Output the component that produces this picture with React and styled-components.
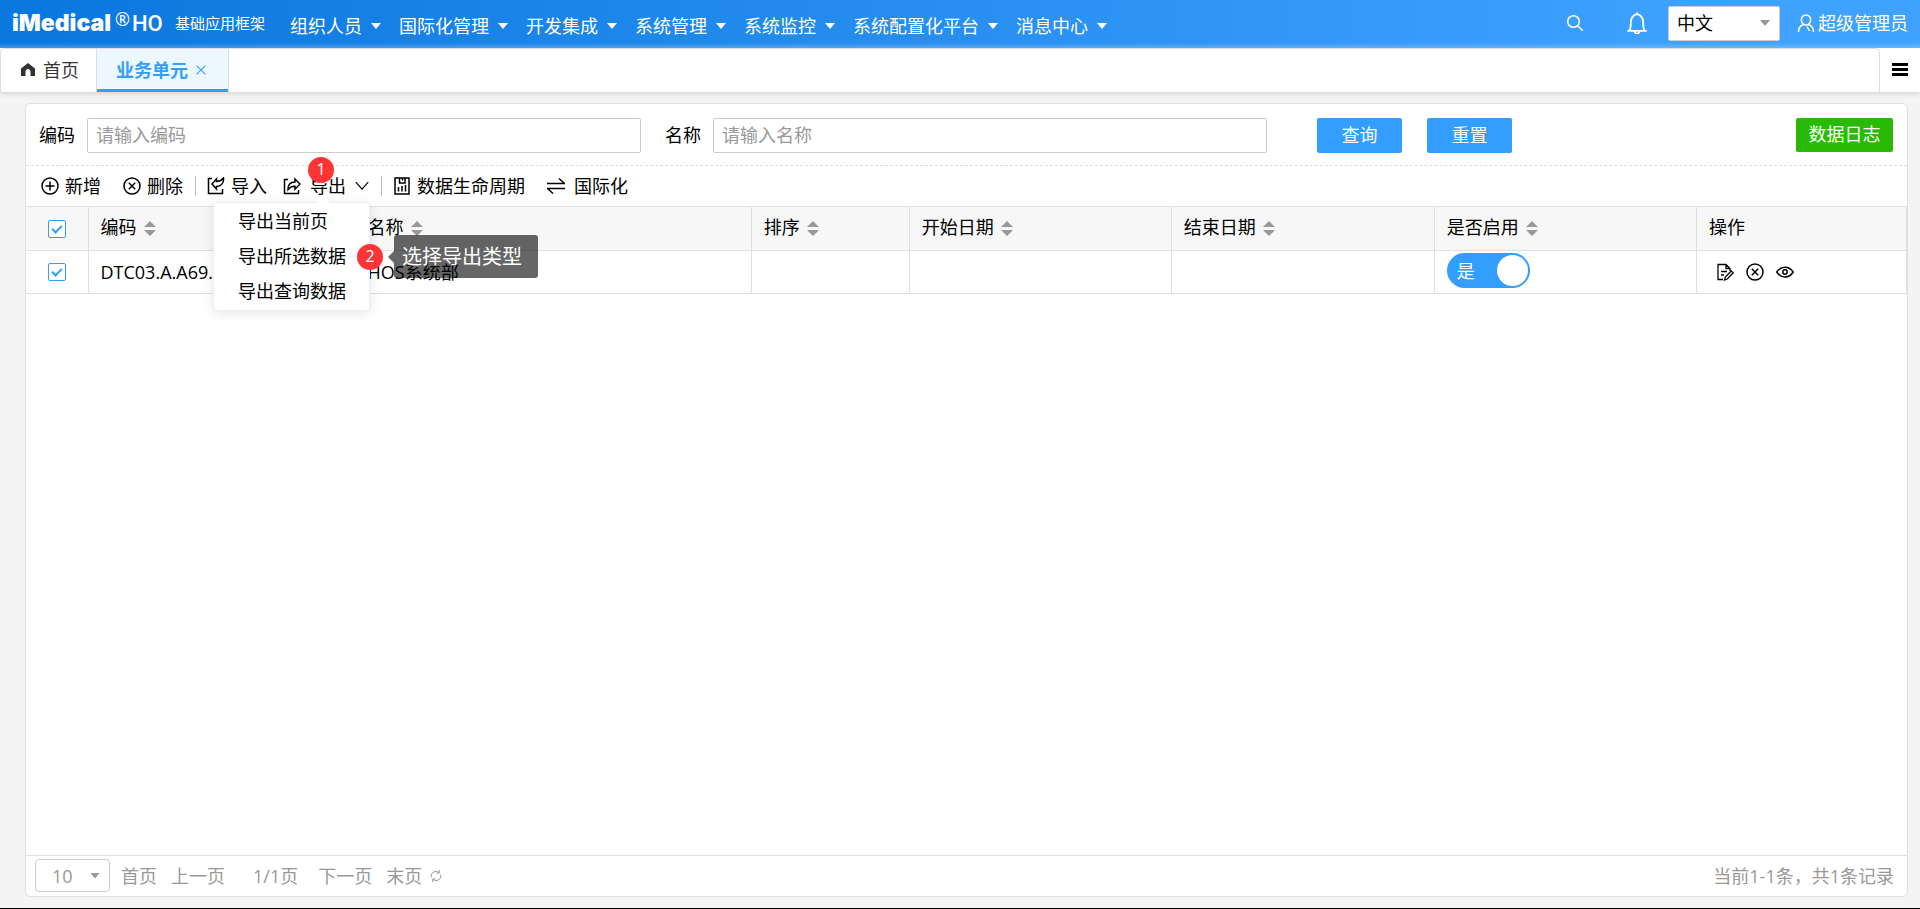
import React, { useState } from 'react';
import styled, { createGlobalStyle } from 'styled-components';

const GlobalStyle = createGlobalStyle`
    *, *::before, *::after {
        box-sizing: border-box;
    }
    body {
        margin: 0;
        background: #f4f4f4;
        color: #000;
        font: 18px/24px "Open Sans", "Noto Sans CJK SC", sans-serif;
    }
    button, input, select {
        font: inherit;
        color: inherit;
        margin: 0;
    }
    button {
        padding: 0;
        border: 0;
        background: none;
        cursor: pointer;
    }
    a {
        color: inherit;
        text-decoration: none;
    }
`;

const Page = styled.div`
    display: flex;
    flex-direction: column;
    min-height: 100vh;
    border-bottom: 1px solid #000;
`;

/* header */
const Header = styled.header`
    display: flex;
    align-items: center;
    height: 48px;
    padding: 0 12px;
    color: #fff;
    white-space: nowrap;
    background: linear-gradient(to right, #0a77de 0%, #40a2ff 90%);
    box-shadow: inset 0 -5px 4px -3px rgba(255, 255, 255, 0.3);
`;
const Brand = styled.a`
    display: flex;
    align-items: center;
    width: 278px;
    height: 44px;
`;
const BrandName = styled.span`
    width: 103px;
    margin-bottom: 2px;
    font: 900 23px/32px Inter, sans-serif;
`;
const BrandMark = styled.sup`
    align-self: flex-start;
    width: 17px;
    margin-top: 5px;
    font: 18px/24px "Open Sans", sans-serif;
`;
const BrandSuffix = styled.span`
    width: 43px;
    font: 500 22px/32px Roboto, sans-serif;
`;
const BrandTitle = styled.span`
    margin-bottom: 2px;
    font-size: 15px;
`;
const Nav = styled.nav`
    display: flex;
    flex: 1;
    gap: 18px;
    padding-top: 4px;
`;
const NavItem = styled.a`
    display: flex;
    align-items: center;
    gap: 9px;
`;
const Caret = styled.span`
    flex: none;
    width: 10px;
    height: 6px;
    background: ${({ $color }) => $color || '#fff'};
    clip-path: polygon(0 0, 100% 0, 50% 100%);
`;
const HeaderTools = styled.div`
    display: flex;
    align-items: center;
    height: 46px;
    margin-bottom: 2px;
`;
const IconButton = styled.button`
    display: flex;
    margin-right: ${({ $space }) => $space || 0}px;
`;
const SelectBox = styled.span`
    position: relative;
    display: inline-flex;
    align-items: center;

    ${Caret} {
        position: absolute;
        right: 10px;
        pointer-events: none;
    }
`;
const LangSelect = styled.select`
    width: 112px;
    height: 35px;
    padding: 0 8px;
    appearance: none;
    color: #000;
    background: #fff;
    border: 1px solid #ccc;
    border-radius: 2px;
`;
const UserLink = styled.a`
    display: flex;
    align-items: center;
    gap: 3px;
    margin-left: 17px;
`;

/* tabs */
const TabBar = styled.div`
    display: flex;
    height: 44px;
    background: #fff;
    box-shadow: 0 2px 5px rgba(0, 0, 0, 0.12);
`;
const TabList = styled.div`
    display: flex;
    flex: 1;
    border: 1px solid #ddd;
    border-bottom: 0;
    border-radius: 5px 5px 0 0;
`;
const Tab = styled.div`
    display: flex;
    align-items: center;
    gap: 8px;
    padding: 0 17px 2px 20px;
    color: #333;
    border-right: 1px solid #ddd;
`;
const ActiveTab = styled(Tab)`
    padding: 0 22px 2px 19px;
    color: #339eff;
    font-weight: 700;
    background: #ecf7fe;
    box-shadow: inset 0 -3px #339eff;
`;
const TabMenu = styled.button`
    display: flex;
    align-items: center;
    justify-content: center;
    width: 40px;
    padding-bottom: 2px;
`;

/* panel */
const Panel = styled.main`
    display: flex;
    flex-direction: column;
    flex: 1;
    margin: 11px 12px 11px 25px;
    background: #fff;
    border: 1px solid #e0e0e0;
    border-radius: 5px;
`;
const SearchForm = styled.form`
    display: flex;
    align-items: flex-start;
    height: 62px;
    padding: 14px 14px 0 13px;
    border-bottom: 1px dashed #ddd;
`;
const Field = styled.label`
    display: flex;
    flex: 1;
    align-items: center;
    gap: 12px;
    max-width: 602px;
    margin-right: 24px;
    white-space: nowrap;
`;
const FieldName = styled.span`
    padding-bottom: 2px;
`;
const TextInput = styled.input`
    flex: 1;
    min-width: 0;
    height: 35px;
    padding: 0 8px 2px;
    background: #fff;
    border: 1px solid #ccc;
    border-radius: 2px;
    outline: 0;

    &::placeholder {
        color: #999;
        opacity: 1;
    }
`;
const FormButtons = styled.div`
    display: flex;
    gap: 25px;
    margin-left: 26px;
    margin-right: auto;
`;
const Button = styled.button`
    width: 85px;
    height: 35px;
    padding-bottom: 2px;
    color: #fff;
    background: #339eff;
    border-radius: 2px;
`;
const LogButton = styled(Button)`
    width: 97px;
    height: 34px;
    background: #28ba05;
`;

const Toolbar = styled.div`
    display: flex;
    align-items: center;
    height: 40px;
    padding: 0 15px;
    white-space: nowrap;
`;
const ToolGroup = styled.div`
    display: flex;
    align-items: center;
    gap: ${({ $gap }) => $gap}px;

    & + & {
        margin-left: 12px;
        padding-left: 12px;
        background: linear-gradient(#bbb, #bbb) left center / 1px 20px no-repeat;
    }
`;
const ToolButton = styled.button`
    display: flex;
    align-items: center;
    gap: ${({ $gap }) => $gap || 6}px;
`;
const Export = styled.div`
    position: relative;
    display: flex;
    align-items: center;
    gap: 9px;
`;
const Badge = styled.span`
    position: absolute;
    z-index: 3;
    width: 26px;
    height: 26px;
    color: #fff;
    font: 16px/24px "Open Sans", sans-serif;
    text-align: center;
    background: #fd3537;
    border-radius: 50%;
`;
const ExportBadge = styled(Badge)`
    top: -17px;
    left: 25px;
`;
const ItemBadge = styled(Badge)`
    top: 5px;
    right: -14px;
`;
const Menu = styled.ul`
    position: absolute;
    top: 28px;
    left: -70px;
    z-index: 2;
    width: 157px;
    margin: 0;
    padding: 1px 0;
    list-style: none;
    background: #fff;
    border: 1px solid #ebeef5;
    border-radius: 3px;
    box-shadow: 0 2px 12px rgba(0, 0, 0, 0.1);

    &::before {
        content: '';
        position: absolute;
        top: -7px;
        left: 102px;
        width: 14px;
        height: 7px;
        background: #fff;
        clip-path: polygon(50% 0, 100% 100%, 0 100%);
    }
`;
const MenuItem = styled.li`
    position: relative;
    height: 35px;
`;
const MenuButton = styled.button`
    width: 100%;
    height: 100%;
    padding: 0 0 2px 24px;
    text-align: left;
`;
const Tooltip = styled.span`
    position: absolute;
    top: -4px;
    left: 180px;
    width: 144px;
    height: 43px;
    padding-left: 8px;
    color: #fff;
    font-size: 20px;
    line-height: 43px;
    background: rgba(0, 0, 0, 0.6);
    border-radius: 3px;

    &::before {
        content: '';
        position: absolute;
        top: 16px;
        left: -6px;
        width: 6px;
        height: 12px;
        background: rgba(0, 0, 0, 0.6);
        clip-path: polygon(0 50%, 100% 0, 100% 100%);
    }
`;

/* table */
const TableArea = styled.div`
    flex: 1;
`;
const Table = styled.table`
    width: 100%;
    table-layout: fixed;
    border-collapse: collapse;
    white-space: nowrap;
`;
const Cell = styled.td`
    height: 43px;
    padding: 0 0 0 12px;
    border: 1px solid #e0e0e0;

    &:first-child {
        border-left: 0;
    }
`;
const HeadCell = styled.th`
    height: 44px;
    padding: 0 0 0 12px;
    font-weight: inherit;
    text-align: left;
    background: #f7f7f7;
    border: 1px solid #e0e0e0;

    &:first-child {
        border-left: 0;
    }
`;
const HeadLabel = styled.span`
    display: flex;
    align-items: center;
    gap: 7px;
    padding-bottom: 3px;
`;
const SortButton = styled.button`
    display: flex;
    padding-top: 3px;
`;
const Checkbox = styled.input`
    display: grid;
    place-items: center;
    width: 18px;
    height: 18px;
    margin-left: 10px;
    appearance: none;
    background: #fff;
    border: 1px solid #339eff;
    border-radius: 2px;

    &:checked::after {
        content: '';
        width: 10px;
        height: 6px;
        margin-bottom: 2px;
        border: solid #339eff;
        border-width: 0 0 2px 2px;
        transform: rotate(-45deg);
    }
`;
const Switch = styled.label`
    display: flex;
    align-items: center;
    justify-content: space-between;
    width: 83px;
    height: 35px;
    margin-bottom: 3px;
    padding: 0 2px 0 10px;
    color: #fff;
    background: #339eff;
    border-radius: 18px;
`;
const SwitchKnob = styled.input`
    width: 31px;
    height: 31px;
    appearance: none;
    background: #fff;
    border-radius: 50%;
`;
const RowActions = styled.div`
    display: flex;
    align-items: center;
    gap: 12px;
    padding-left: 7px;
`;

/* pager */
const Pager = styled.footer`
    display: flex;
    align-items: center;
    height: 41px;
    padding: 0 13px 1px 9px;
    color: #999;
    white-space: nowrap;
    border-top: 1px solid #e0e0e0;
`;
const SizeSelect = styled.select`
    width: 75px;
    height: 33px;
    padding: 0 16px;
    appearance: none;
    background: #fff;
    border: 1px solid #ccc;
    border-radius: 4px;
`;
const PageLinks = styled.div`
    display: flex;
    align-items: center;
    gap: 14px;
    margin-left: 11px;
`;
const PageNumber = styled.span`
    margin: 0 6px 0 14px;
`;
const LastPage = styled.span`
    display: flex;
    align-items: center;
    gap: 8px;
`;
const Total = styled.span`
    margin-left: auto;
`;

const icons = {
    plus: <><circle cx="9" cy="9" r="8" /><path d="M9 4.5v9M4.5 9h9" /></>,
    remove: <><circle cx="9" cy="9" r="8" /><path d="M5.8 5.8l6.4 6.4M12.2 5.8l-6.4 6.4" /></>,
    importIn: <path d="M5 1.5H1.5v15h14V12M5 7l4.500-5v2.500C13 4.300 15 3 16.500 1 17 6 14 9.500 9.500 9.500V12L5 7z" />,
    exportOut: <path d="M5 2.500H1.500v14h14V13M17 7l-5-5v3C7.500 5 5 8 5 12.500 7 10 9 9 12 9.200v3L17 7z" />,
    chart: <path d="M2 1h14v16H2zM6.500 1v5h5.500V1M9.500 1v2.500M5.500 14.500V10M9 14.500V9M12.500 14.500V8" />,
    swap: <path d="M0 6.500h17.500L12 1.500M18 11.500H.5L6 16.500" />,
    edit: <path d="M7 16.500H2v-15h8l4 4V8M10 1.500v4h4M5 8.500h6M5 12h3M8.500 17l.8-3 6-6 1.900 1.800-6 6.200z" />,
    eye: <><path d="M.8 9c4-6.500 12.400-6.500 16.400 0-4 6.500-12.400 6.500-16.400 0z" /><circle cx="9" cy="9" r="2.200" /></>,
    search: <><circle cx="7.500" cy="7.500" r="5.800" /><path d="M11.700 11.700l5 5" /></>,
    bell: <path d="M9 .5v1.200M1 15.500h16M2.800 15.500C4 13 4 11 4 8a5 6 0 0 1 10 0c0 3 0 5 1.200 7.500M7 16a2 1.500 0 0 0 4 0" />,
    user: <path d="M9 1a4.700 4.700 0 0 1 4.700 4.700C13.700 8.500 11.500 11 9 11S4.300 8.500 4.300 5.700A4.700 4.700 0 0 1 9 1zM6.500 10.500C3.500 11.500 1.500 14 1.500 18M10 12.500l2.500 4.500M11.500 10.500c3 1 5 3.500 5 7.500" />,
    chevron: <path d="M1 4l8 9 8-9" />,
    close: <path d="M1 1l16 16M17 1L1 17" />,
    refresh: <path d="M2 11A7 7 0 0 1 13 3.500M16 7A7 7 0 0 1 5 14.500M9.500 4.500h4.500V0M8.500 13.500H4V18" />,
};

const Icon = ({ name, size = 18, width = 1.5 }) => (
    <svg width={size} height={size} viewBox="0 0 18 18" fill="none" stroke="currentColor" strokeWidth={width} aria-hidden="true">
        {icons[name]}
    </svg>
);

const menus = ['组织人员', '国际化管理', '开发集成', '系统管理', '系统监控', '系统配置化平台', '消息中心'];
const columns = [
    { title: '编码', width: 267, sort: true },
    { title: '名称', width: 396, sort: true },
    { title: '排序', width: 158, sort: true },
    { title: '开始日期', width: 262, sort: true },
    { title: '结束日期', width: 263, sort: true },
    { title: '是否启用', width: 262, sort: true },
    { title: '操作', width: 210 },
];

const AppHeader = () => (
    <Header>
        <Brand href="#">
            <BrandName>iMedical</BrandName>
            <BrandMark>®</BrandMark>
            <BrandSuffix>HO</BrandSuffix>
            <BrandTitle>基础应用框架</BrandTitle>
        </Brand>
        <Nav>
            {menus.map((item) => (
                <NavItem href="#" key={item}>{item}<Caret /></NavItem>
            ))}
        </Nav>
        <HeaderTools>
            <IconButton aria-label="搜索" $space={42}><Icon name="search" /></IconButton>
            <IconButton aria-label="通知" $space={20}><Icon name="bell" size={22} /></IconButton>
            <SelectBox>
                <LangSelect aria-label="语言"><option>中文</option></LangSelect>
                <Caret $color="#999" />
            </SelectBox>
            <UserLink href="#"><Icon name="user" />超级管理员</UserLink>
        </HeaderTools>
    </Header>
);

const Tabs = () => (
    <TabBar>
        <TabList>
            <Tab>
                <svg width="14" height="13" viewBox="0 0 14 13" fill="#333" aria-hidden="true">
                    <path d="M7 0l7 5.500V13H9.500V8.500a2.500 2.500 0 0 0-5 0V13H0V5.500z" />
                </svg>
                <a href="#">首页</a>
            </Tab>
            <ActiveTab>
                <a href="#">业务单元</a>
                <IconButton aria-label="关闭"><Icon name="close" size={10} width={2} /></IconButton>
            </ActiveTab>
        </TabList>
        <TabMenu aria-label="标签菜单">
            <svg width="16" height="13" viewBox="0 0 16 13" aria-hidden="true">
                <path d="M0 1.500h16M0 6.500h16M0 11.500h16" stroke="#000" strokeWidth="3" />
            </svg>
        </TabMenu>
    </TabBar>
);

const ExportMenu = () => (
    <Export>
        <Icon name="exportOut" />
        <ToolButton $gap={9}>导出<Icon name="chevron" size={14} /></ToolButton>
        <ExportBadge>1</ExportBadge>
        <Menu>
            <MenuItem><MenuButton>导出当前页</MenuButton></MenuItem>
            <MenuItem>
                <MenuButton>导出所选数据</MenuButton>
                <ItemBadge>2</ItemBadge>
                <Tooltip role="tooltip">选择导出类型</Tooltip>
            </MenuItem>
            <MenuItem><MenuButton>导出查询数据</MenuButton></MenuItem>
        </Menu>
    </Export>
);

const App = () => {
    const [checked, setChecked] = useState(true);
    const [enabled, setEnabled] = useState(true);
    const toggleRow = () => setChecked(!checked);

    return (
        <Page>
            <GlobalStyle />
            <AppHeader />
            <Tabs />
            <Panel>
                <SearchForm onSubmit={(e) => e.preventDefault()}>
                    <Field><FieldName>编码</FieldName><TextInput type="text" placeholder="请输入编码" /></Field>
                    <Field><FieldName>名称</FieldName><TextInput type="text" placeholder="请输入名称" /></Field>
                    <FormButtons>
                        <Button type="submit">查询</Button>
                        <Button type="reset">重置</Button>
                    </FormButtons>
                    <LogButton type="button">数据日志</LogButton>
                </SearchForm>
                <Toolbar>
                    <ToolGroup $gap={22}>
                        <ToolButton><Icon name="plus" />新增</ToolButton>
                        <ToolButton><Icon name="remove" />删除</ToolButton>
                    </ToolGroup>
                    <ToolGroup $gap={16}>
                        <ToolButton><Icon name="importIn" />导入</ToolButton>
                        <ExportMenu />
                    </ToolGroup>
                    <ToolGroup $gap={22}>
                        <ToolButton><Icon name="chart" />数据生命周期</ToolButton>
                        <ToolButton $gap={9}><Icon name="swap" />国际化</ToolButton>
                    </ToolGroup>
                </Toolbar>
                <TableArea>
                    <Table>
                        <colgroup>
                            <col width="62" />
                            {columns.map((col) => <col key={col.title} width={col.width} />)}
                        </colgroup>
                        <thead>
                            <tr>
                                <HeadCell>
                                    <Checkbox type="checkbox" aria-label="全选" checked={checked} onChange={toggleRow} />
                                </HeadCell>
                                {columns.map((col) => (
                                    <HeadCell key={col.title}>
                                        <HeadLabel>
                                            {col.title}
                                            {col.sort && (
                                                <SortButton aria-label="排序">
                                                    <svg width="12" height="15" viewBox="0 0 12 15" fill="#999" aria-hidden="true">
                                                        <path d="M6 0l6 6H0zM6 15L0 9h12z" />
                                                    </svg>
                                                </SortButton>
                                            )}
                                        </HeadLabel>
                                    </HeadCell>
                                ))}
                            </tr>
                        </thead>
                        <tbody>
                            <tr>
                                <Cell>
                                    <Checkbox type="checkbox" aria-label="选择行" checked={checked} onChange={toggleRow} />
                                </Cell>
                                <Cell>DTC03.A.A69.</Cell>
                                <Cell>HOS系统部</Cell>
                                <Cell />
                                <Cell />
                                <Cell />
                                <Cell>
                                    <Switch>
                                        是
                                        <SwitchKnob type="checkbox" role="switch" checked={enabled} onChange={() => setEnabled(!enabled)} />
                                    </Switch>
                                </Cell>
                                <Cell>
                                    <RowActions>
                                        <IconButton aria-label="编辑"><Icon name="edit" width={1.3} /></IconButton>
                                        <IconButton aria-label="删除"><Icon name="remove" /></IconButton>
                                        <IconButton aria-label="查看"><Icon name="eye" /></IconButton>
                                    </RowActions>
                                </Cell>
                            </tr>
                        </tbody>
                    </Table>
                </TableArea>
                <Pager>
                    <SelectBox>
                        <SizeSelect aria-label="每页条数"><option>10</option></SizeSelect>
                        <Caret $color="#999" />
                    </SelectBox>
                    <PageLinks>
                        <a href="#">首页</a>
                        <a href="#">上一页</a>
                        <PageNumber>1/1页</PageNumber>
                        <a href="#">下一页</a>
                        <LastPage>
                            <a href="#">末页</a>
                            <IconButton aria-label="刷新"><Icon name="refresh" size={12} /></IconButton>
                        </LastPage>
                    </PageLinks>
                    <Total>当前1-1条，共1条记录</Total>
                </Pager>
            </Panel>
        </Page>
    );
};

export default App;
